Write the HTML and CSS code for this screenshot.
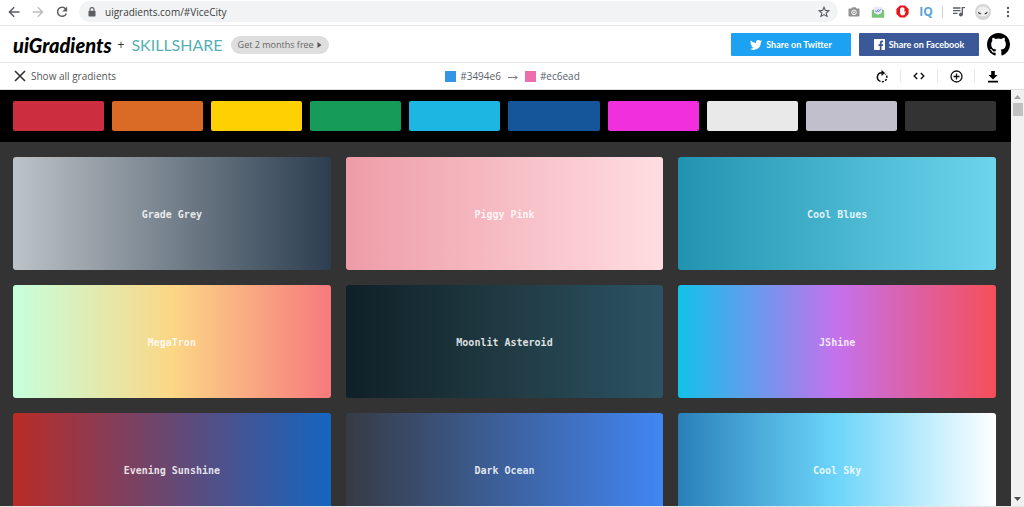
FILE: index.html
```html
<!DOCTYPE html>
<html lang="en">
<head>
<meta charset="utf-8">
<title>uiGradients</title>
<link rel="stylesheet" href="styles.css">
</head>
<body>
<div class="browser">
  <div class="chrome">
    <button class="chrome-btn" aria-label="Back"><svg width="12" height="12" viewBox="0 0 12 12" fill="none" stroke="#5a5d61" stroke-width="1.5"><path d="M11.5 6H1.5M6.2 1.2L1.4 6l4.8 4.8"/></svg></button>
    <button class="chrome-btn" aria-label="Forward"><svg width="12" height="12" viewBox="0 0 12 12" fill="none" stroke="#babcbe" stroke-width="1.4"><path d="M.5 6h10M5.8 1.2L10.6 6l-4.8 4.8"/></svg></button>
    <button class="chrome-btn" aria-label="Reload"><svg width="12" height="12" viewBox="0 0 12 12"><path d="M9.6 3A4.5 4.5 0 1 0 10.3 7.4" fill="none" stroke="#5a5d61" stroke-width="1.5"/><path d="M11.2 .6v4.8H6.4z" fill="#5a5d61"/></svg></button>
    <div class="address">
      <svg width="8" height="10" viewBox="0 0 8 10"><path d="M2 4V2.6a2 2 0 0 1 4 0V4" fill="none" stroke="#5a5d61" stroke-width="1.1"/><rect x=".5" y="3.7" width="7" height="5.8" rx=".7" fill="#5a5d61"/></svg>
      <input class="url" type="text" aria-label="Address" value="uigradients.com/#ViceCity">
      <button class="plain" aria-label="Bookmark"><svg width="12" height="12" viewBox="0 0 12 12"><path d="M6 1.2l1.4 3.2 3.5.3-2.7 2.3.8 3.4-3-1.8-3 1.8.8-3.4L1.100 4.700l3.500-.3z" fill="none" stroke="#5a5d61" stroke-width="1.1"/></svg></button>
    </div>
    <div class="extensions">
      <button class="ext" aria-label="Camera"><svg width="12" height="12" viewBox="0 0 12 12"><path d="M1.500 2.500H3.400L4.400 1.200h3.200l1 1.300h1.900q1 0 1 1v6q0 1-1 1h-9q-1 0-1-1v-6q0-1 1-1z" fill="#929292"/><circle cx="6" cy="6.400" r="2.300" fill="#929292" stroke="#fff"/><circle cx="6" cy="6.400" r=".8" fill="#fff"/></svg></button>
      <button class="ext" aria-label="Mail tracker"><svg width="14" height="12" viewBox="0 0 14 12"><path d="M.8 4.500L3 3v3.500l4 2 4-2V3l2.200 1.500V11q0 .7-.7.700h-11q-.7 0-.7-.700z" fill="#78c479"/><path d="M3 1h8v5.500L7 8.800 3 6.500z" fill="#e8e9ff"/><path d="M4 4.500l1.500 1.300 2-2.500M6.500 5l1 .8 2.200-2.500" fill="none" stroke="#696bd1" stroke-width=".9"/></svg></button>
      <button class="ext" aria-label="Ad blocker"><svg width="13" height="13" viewBox="0 0 13 13"><path d="M4 .4h5L12.600 4v5L9 12.600H4L.4 9V4z" fill="#e6161a"/><path d="M4.100 5.300V3.400q.6-.6 1 0V2.700q.6-.7 1.100 0v-.3q.7-.6 1.100 0V3q.7-.6 1.100.1v3.600l.8-.5q.6 0 .5.500l-1.400 3.500H5.100q-1-1.200-1-2.500z" fill="#fff"/></svg></button>
      <button class="ext iq" aria-label="IQ">IQ</button>
      <span class="chrome-sep"></span>
      <button class="ext" aria-label="Media"><svg width="12" height="11" viewBox="0 0 12 11"><path d="M0 2h7.500M0 4.700h7.500M0 7.400h4.500M9.300 8.500V1.700H12" fill="none" stroke="#5a5d61" stroke-width="1.300"/><circle cx="7.900" cy="8.500" r="1.900" fill="#5a5d61"/></svg></button>
      <button class="ext avatar" aria-label="Profile"><svg width="16" height="16" viewBox="0 0 16 16"><circle cx="8" cy="8" r="8" fill="#d5d5d5"/><ellipse cx="8" cy="7.500" rx="6.200" ry="5" fill="#efefef"/><path d="M2.800 7.600l3.800 2.300q-3.200 1.200-3.800-2.300zM12.800 7.600L9.200 9.900q3 1.200 3.600-2.300z" fill="#222"/></svg></button>
      <button class="ext" aria-label="Menu"><svg width="4" height="12" viewBox="0 0 4 12" fill="#5a5d61"><circle cx="2" cy="2" r="1.200"/><circle cx="2" cy="6" r="1.200"/><circle cx="2" cy="10" r="1.200"/></svg></button>
    </div>
  </div>

  <header class="header">
    <div class="brand">
      <a class="logo" href="#">uiGradients</a>
      <span class="plus">+</span>
      <a class="partner" href="#">SKILLSHARE</a>
      <a class="promo" href="#">Get 2 months free <svg width="5" height="6" viewBox="0 0 5 6"><path d="M.5 0l4 3-4 3z" fill="#555"/></svg></a>
    </div>
    <div class="social">
      <a class="share twitter" href="#"><svg width="12" height="10" viewBox="0 0 24 20"><path d="M24 2.400a10 10 0 0 1-2.800.8A5 5 0 0 0 23.300.500a10 10 0 0 1-3.100 1.200 4.900 4.900 0 0 0-8.400 4.500A14 14 0 0 1 1.700 1a4.900 4.900 0 0 0 1.500 6.600A5 5 0 0 1 1 7a4.900 4.900 0 0 0 4 4.800 5 5 0 0 1-2.300.1 4.900 4.900 0 0 0 4.600 3.400A10 10 0 0 1 0 17.400 14 14 0 0 0 21.500 4.900 10 10 0 0 0 24 2.400z" fill="#fff"/></svg>Share on Twitter</a>
      <a class="share facebook" href="#"><svg width="11" height="11" viewBox="0 0 24 24"><path d="M1.500 0h21q1.500 0 1.500 1.500v21q0 1.500-1.500 1.500h-6v-9h3l.5-3.800h-3.500V9q0-2 1.900-2H20V3.500h-3q-4.300 0-4.300 4.700v3h-3V15h3v9H1.500Q0 24 0 22.500v-21Q0 0 1.500 0z" fill="#fff"/></svg>Share on Facebook</a>
      <a class="github" href="#" aria-label="GitHub"><svg width="23" height="23" viewBox="0 0 16 16"><path d="M8 0C3.580 0 0 3.580 0 8c0 3.540 2.290 6.530 5.470 7.590.4.070.55-.17.55-.38 0-.19-.01-.82-.01-1.490-2.010.37-2.530-.49-2.690-.94-.09-.23-.48-.94-.82-1.130-.28-.15-.68-.52-.01-.53.63-.01 1.080.58 1.230.82.72 1.210 1.870.87 2.330.66.070-.52.28-.87.51-1.070-1.780-.2-3.640-.89-3.640-3.950 0-.87.31-1.590.82-2.150-.08-.2-.36-1.020.08-2.120 0 0 .67-.21 2.200.82a7.600 7.600 0 0 1 4 0c1.530-1.040 2.200-.82 2.200-.82.44 1.100.16 1.920.08 2.120.51.56.82 1.270.82 2.150 0 3.070-1.870 3.750-3.650 3.950.29.25.54.73.54 1.480 0 1.070-.01 1.930-.01 2.200 0 .21.15.46.55.38A8 8 0 0 0 16 8c0-4.420-3.580-8-8-8z"/></svg></a>
    </div>
  </header>

  <div class="toolbar">
    <button class="show-all"><svg width="12" height="12" viewBox="0 0 12 12" fill="none" stroke="#333" stroke-width="1.600"><path d="M1 1l10 10M11 1L1 11"/></svg>Show all gradients</button>
    <div class="colors">
      <span class="color"><span class="chip blue"></span>#3494e6</span>
      <svg width="10" height="7" viewBox="0 0 10 7" fill="none" stroke="#666" stroke-width=".9"><path d="M0 4.500h9M7 2.500l2 2-2 2"/></svg>
      <span class="color"><span class="chip pink"></span>#ec6ead</span>
    </div>
    <div class="actions">
      <button class="action" aria-label="Rotate"><svg width="12" height="13" viewBox="0 0 12 13"><path d="M6 2.800A4.400 4.400 0 0 0 4.500 11.400" fill="none" stroke="#111" stroke-width="1.500"/><path d="M5.800 11.600A4.400 4.400 0 0 0 9.400 4" fill="none" stroke="#111" stroke-width="1.500" stroke-dasharray="2.200 1.200"/><path d="M5.500 0l3.700 3-3.700 3z" fill="#111"/></svg></button>
      <button class="action" aria-label="Show CSS"><svg width="12" height="8" viewBox="0 0 12 8" fill="none" stroke="#111" stroke-width="1.400"><path d="M4.200 1L1.200 4l3 3M7.800 1l3 3-3 3"/></svg></button>
      <button class="action" aria-label="Add gradient"><svg width="13" height="13" viewBox="0 0 13 13" fill="none" stroke="#111" stroke-width="1.300"><circle cx="6.500" cy="6.500" r="5.500"/><path d="M6.500 3.500v6M3.500 6.500h6"/></svg></button>
      <button class="action" aria-label="Download"><svg width="10" height="13" viewBox="0 0 10 13"><path d="M3.200 1h3.600v4H9.500L5 9.400.5 5h2.700zM0 10.700h10v1.700H0z" fill="#000"/></svg></button>
    </div>
  </div>

  <div class="viewport">
    <main class="content">
      <div class="palette">
        <button class="swatch red" aria-label="Red"></button>
        <button class="swatch orange" aria-label="Orange"></button>
        <button class="swatch yellow" aria-label="Yellow"></button>
        <button class="swatch green" aria-label="Green"></button>
        <button class="swatch cyan" aria-label="Cyan"></button>
        <button class="swatch navy" aria-label="Blue"></button>
        <button class="swatch magenta" aria-label="Magenta"></button>
        <button class="swatch white" aria-label="White"></button>
        <button class="swatch grey" aria-label="Grey"></button>
        <button class="swatch black" aria-label="Black"></button>
      </div>
      <div class="gallery">
        <a class="card grade-grey" href="#">Grade Grey</a>
        <a class="card piggy-pink" href="#">Piggy Pink</a>
        <a class="card cool-blues" href="#">Cool Blues</a>
        <a class="card megatron" href="#">MegaTron</a>
        <a class="card moonlit" href="#">Moonlit Asteroid</a>
        <a class="card jshine" href="#">JShine</a>
        <a class="card evening" href="#">Evening Sunshine</a>
        <a class="card dark-ocean" href="#">Dark Ocean</a>
        <a class="card cool-sky" href="#">Cool Sky</a>
      </div>
    </main>
    <div class="scrollbar">
      <svg width="7" height="4" viewBox="0 0 7 4"><path d="M0 4l3.500-4L7 4z" fill="#a3a3a3"/></svg>
      <span class="thumb"></span>
      <svg class="down" width="7" height="4" viewBox="0 0 7 4"><path d="M0 0l3.500 4L7 0z" fill="#505050"/></svg>
    </div>
  </div>
</div>
</body>
</html>
```
FILE: styles.css
```css
* { box-sizing: border-box; }
body { margin: 0; background: #fff; font-family: "Open Sans", "Noto Sans", sans-serif; font-size: 10px; color: #555; }
button, input { font: inherit; color: inherit; border: 0; padding: 0; background: none; }
a { color: inherit; text-decoration: none; }
svg { display: block; flex: none; }

.browser { height: 100vh; display: flex; flex-direction: column; border-bottom: 1px solid #e4e4e4; overflow: hidden; }

.chrome { display: flex; align-items: center; padding: 1px 3px 3px 2px; border-bottom: 1px solid #e3e4e6; }
.chrome-btn { width: 24px; display: flex; justify-content: center; }
.address { flex: 1; display: flex; align-items: center; gap: 9px; margin-left: 5px; padding: 0 8px 0 9px; height: 21px; border-radius: 11px; background: #f1f3f4; }
.url { flex: 1; min-width: 0; color: #3c4043; outline: 0; }
.plain { display: flex; }
.extensions { display: flex; align-items: center; margin-left: 4px; }
.ext { width: 24px; display: flex; justify-content: center; }
.ext:last-child { width: 26px; }
.iq { font-weight: 700; font-size: 12px; line-height: 16px; color: #5aa3d6; }
.chrome-sep { width: 1px; height: 12px; margin: 0 4px; background: #cfd1d3; }

.header { display: flex; align-items: center; justify-content: space-between; padding: 7px 14px 6px 13px; border-bottom: 1px solid #e8e8e8; }
.brand { display: flex; align-items: center; }
.logo { font-family: Lato, sans-serif; font-style: italic; font-weight: 900; font-size: 20px; line-height: 22px; color: #000; }
.plus { margin: 0 7px 0 6px; font-size: 12px; line-height: 18px; color: #333; }
.partner { font-family: Lato, sans-serif; font-size: 16px; line-height: 20px; color: #55b1b4; }
.promo { display: flex; align-items: center; gap: 3px; margin-left: 8px; padding: 0 7px; border-radius: 9px; background: #dedede; color: #666; font-size: 9px; line-height: 18px; }
.social { display: flex; align-items: center; gap: 8px; }
.share { width: 120px; display: flex; align-items: center; justify-content: center; gap: 4px; border-radius: 1px; color: #fff; font-family: Lato, sans-serif; font-size: 9px; font-weight: 700; line-height: 23px; }
.twitter { background: #1da1f2; }
.facebook { background: #3b5998; }

.toolbar { display: grid; grid-template-columns: 1fr auto 1fr; align-items: center; padding: 0 13px 0 14px; border-bottom: 1px solid #ddd; line-height: 26px; }
.show-all { justify-self: start; display: flex; align-items: center; gap: 5px; }
.colors { display: flex; align-items: center; gap: 7px; color: #56616b; }
.color { display: flex; align-items: center; gap: 4px; }
.chip { width: 11px; height: 11px; }
.blue { background: #3494e6; }
.pink { background: #ec6ead; }
.actions { justify-self: end; display: flex; }
.action { display: flex; align-items: center; justify-content: center; width: 37px; height: 12px; border-left: 1px solid #e5e5e5; }
.action:first-child { border-left: 0; }

.viewport { flex: 1; min-height: 0; display: flex; overflow: hidden; }
.content { flex: 1; background: #333; }
.palette { display: grid; grid-template-columns: repeat(10, 1fr); gap: 8px; padding: 11px 15px 11px 13px; background: #000; }
.swatch { height: 30px; border-radius: 2px; }
.red { background: #cc2d3f; }
.orange { background: #d96b27; }
.yellow { background: #ffd103; }
.green { background: #169b58; }
.cyan { background: #1db5e2; }
.navy { background: #15559a; }
.magenta { background: #f12fdd; }
.white { background: #e9e9e9; }
.grey { background: #c0bfcb; }
.black { background: #333; }

.gallery { display: grid; grid-template-columns: repeat(3, 1fr); gap: 15px; padding: 15px 15px 15px 13px; }
.card { padding: 51px 0 49px; border-radius: 3px; text-align: center; line-height: 13px; font-family: "DejaVu Sans Mono", monospace; font-weight: 700; color: rgba(255, 255, 255, .85); }
.grade-grey { background: linear-gradient(to right, #bdc3c7, #2c3e50); }
.piggy-pink { background: linear-gradient(to right, #ee9ca7, #ffdde1); }
.cool-blues { background: linear-gradient(to right, #2193b0, #6dd5ed); }
.megatron { background: linear-gradient(to right, #c6ffdd, #fbd786, #f7797d); }
.moonlit { background: linear-gradient(to right, #0f2027, #203a43, #2c5364); }
.jshine { background: linear-gradient(to right, #12c2e9, #c471ed, #f64f59); }
.evening { background: linear-gradient(to right, #b92b27, #1565c0); }
.dark-ocean { background: linear-gradient(to right, #373b44, #4286f4); }
.cool-sky { background: linear-gradient(to right, #2980b9, #6dd5fa, #fff); }

.scrollbar { width: 13px; display: flex; flex-direction: column; align-items: center; padding: 5px 0; background: #f1f1f1; }
.thumb { width: 10px; height: 13px; margin-top: 4px; background: #c1c1c1; }
.down { margin-top: auto; }
```
